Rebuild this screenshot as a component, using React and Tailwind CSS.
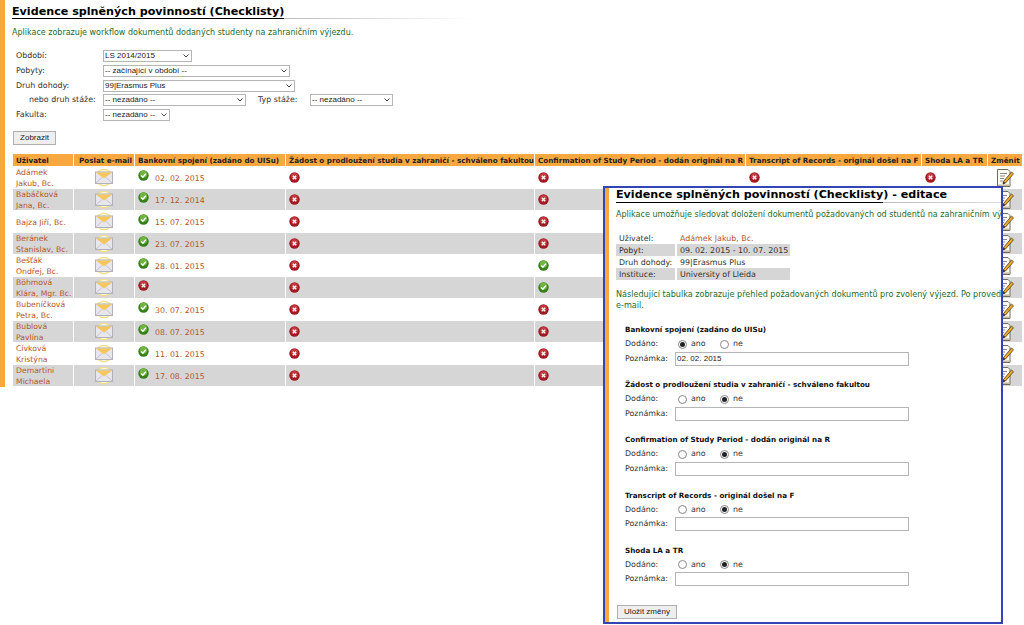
import React from "react";

const Check = () => (
  <svg width="11" height="11" viewBox="0 0 11 11" className="block shrink-0">
    <circle cx="5.5" cy="5.5" r="5.2" fill="#37801c" />
    <circle cx="5.5" cy="4.2" r="3.6" fill="#6fb540" />
    <path d="M3.2 5.6 L4.9 7.2 L7.9 3.6" stroke="#fff" strokeWidth="1.4" fill="none" />
  </svg>
);
const Cross = () => (
  <svg width="11" height="11" viewBox="0 0 11 11" className="block shrink-0">
    <circle cx="5.5" cy="5.5" r="5.2" fill="#a11a22" />
    <circle cx="5.5" cy="4.4" r="3.4" fill="#c23a40" />
    <path d="M3.8 3.8 L7.2 7.2 M7.2 3.8 L3.8 7.2" stroke="#fff" strokeWidth="1.3" fill="none" />
  </svg>
);
const Mail = () => (
  <svg width="20" height="19" viewBox="0 0 20 19" className="block mx-auto">
    <path d="M3.5 4 Q10 -1.5 16.5 4" stroke="#f0dc86" strokeWidth="1.1" fill="#fdf8dc" />
    <path d="M3.5 15 Q10 20.5 16.5 15" stroke="#f0dc86" strokeWidth="1.1" fill="#fdf8dc" />
    <rect x="1.5" y="4" width="17" height="11.5" fill="#e6e6ec" stroke="#b0b0ba" />
    <path d="M2 4.5 L10 10.5 L18 4.5 Z" fill="#f4c65c" />
    <path d="M2 15 L8 9.5 M18 15 L12 9.5" stroke="#c5c5cc" strokeWidth="1" fill="none" />
  </svg>
);
const Edit = () => (
  <svg width="20" height="20" viewBox="0 0 20 20" className="block">
    <path d="M2.5 1.5 H13 L15 3.5 V18.5 H2.5 Z" fill="#fbfbf6" stroke="#6d6d5c" strokeWidth="1" />
    <path d="M3 16.5 H14.5 V18 H3 Z" fill="#c9b89a" />
    <path d="M5 5.5 H12 M5 8 H10 M5 10.5 H9 M5 13 H8" stroke="#8b8b8b" strokeWidth="1" />
    <path d="M8.5 13.5 L16.5 4 L18.5 5.8 L10.5 15 L8 16 Z" fill="#e8a92c" stroke="#54411a" strokeWidth=".8" />
    <path d="M8.5 13.5 L8 16 L10.5 15 Z" fill="#2b2b2b" />
  </svg>
);

const rows = [
  [["Adámek", "Jakub, Bc."], "02. 02. 2015", "x"],
  [["Babáčková", "Jana, Bc."], "17. 12. 2014", "x"],
  [["Bajza Jiří, Bc."], "15. 07. 2015", "x"],
  [["Beránek", "Stanislav, Bc."], "23. 07. 2015", "x"],
  [["Bešťák", "Ondřej, Bc."], "28. 01. 2015", "c"],
  [["Böhmová", "Klára, Mgr. Bc."], "", "c"],
  [["Bubeníčková", "Petra, Bc."], "30. 07. 2015", "x"],
  [["Bublová", "Pavlína"], "08. 07. 2015", "x"],
  [["Cívková", "Kristýna"], "11. 01. 2015", "x"],
  [["Demartini", "Michaela"], "17. 08. 2015", "x"],
];

const headers = [
  ["Uživatel", "w-[60px]", "text-left"],
  ["Poslat e-mail", "w-[60px]", "text-center"],
  ["Bankovní spojení (zadáno do UISu)", "w-[150px]", "text-left"],
  ["Žádost o prodloužení studia v zahraničí - schváleno fakultou", "w-[248px]", "text-left"],
  ["Confirmation of Study Period - dodán originál na R", "w-[210px]", "text-left"],
  ["Transcript of Records - originál došel na F", "w-[175px]", "text-left"],
  ["Shoda LA a TR", "w-[65px]", "text-left"],
  ["Změnit", "w-[34px]", "text-left"],
];

const Select = ({ width, value }) => (
  <div className={`relative shrink-0 ${width}`}>
    <select
      className="block w-full h-[12px] appearance-none border border-[#b5b5b5] bg-white text-[8px] leading-none text-[#222] font-['Liberation_Sans',sans-serif] pl-[1px] rounded-none"
      defaultValue={value}
    >
      <option>{value}</option>
    </select>
    <svg width="6" height="4" viewBox="0 0 6 4" className="absolute right-[3px] top-[4px] pointer-events-none">
      <path d="M0.5 0.5 L3 3 L5.5 0.5" stroke="#444" strokeWidth="1" fill="none" />
    </svg>
  </div>
);

const Field = ({ label, width, value }) => (
  <div className="flex items-center h-[14.7px]">
    <span className="w-[87px] shrink-0">{label}</span>
    <Select width={width} value={value} />
  </div>
);

const Radio = ({ on }) => (
  <span className="w-[9px] h-[9px] rounded-full border border-[#888] bg-white shrink-0 flex items-center justify-center">
    {on && <span className="w-[5px] h-[5px] rounded-full bg-[#222]" />}
  </span>
);

const Section = ({ title, yes, note }) => (
  <div className="h-[55.2px] pl-[9px]">
    <div className="font-bold text-[#111] text-[7.2px] h-[14px] leading-[14px]">{title}</div>
    <div className="flex items-center h-[14px]">
      <span className="w-[53px] shrink-0">Dodáno:</span>
      <Radio on={yes} />
      <span className="ml-[4px] w-[29px]">ano</span>
      <Radio on={!yes} />
      <span className="ml-[4px]">ne</span>
    </div>
    <div className="flex items-center h-[15px]">
      <span className="w-[50px] shrink-0">Poznámka:</span>
      <input
        readOnly
        value={note}
        className="w-[234px] h-[14px] border border-[#b5b5b5] bg-white px-[1px] text-[8px] text-[#222] font-['Liberation_Sans',sans-serif]"
      />
    </div>
  </div>
);

export default function App() {
  return (
    <div className="relative w-[1024px] h-[625px] overflow-hidden bg-white flex items-start font-['DejaVu_Sans',sans-serif] text-[7.9px] text-[#333]">
      <div className="w-[5px] h-[387px] bg-[#f9a83f] shrink-0" />
      <div className="pl-[7px] flex-1 min-w-0">
        <h1 className="pt-[5px] h-[18px] text-[11.15px] leading-[13px] font-bold text-black whitespace-nowrap">
          Evidence splněných povinností (Checklisty)
        </h1>
        <div className="h-px w-[460px] bg-[linear-gradient(to_right,#000_272px,#bbb_272px,#fff)]" />
        <p className="mt-[8px] h-[12px] text-[8px] leading-[12px] text-[#1d6b2c] whitespace-nowrap">
          Aplikace zobrazuje workflow dokumentů dodaných studenty na zahraničním výjezdu.
        </p>
        <div className="mt-[10px] pl-[4px]">
          <Field label="Období:" width="w-[89px]" value="LS 2014/2015" />
          <Field label="Pobyty:" width="w-[187px]" value="-- začínající v období --" />
          <Field label="Druh dohody:" width="w-[192px]" value="99|Erasmus Plus" />
          <div className="flex items-center h-[14.7px]">
            <span className="w-[87px] shrink-0 pl-[13px]">nebo druh stáže:</span>
            <Select width="w-[143px]" value="-- nezadáno --" />
            <span className="ml-[12px] w-[52px]">Typ stáže:</span>
            <Select width="w-[83px]" value="-- nezadáno --" />
          </div>
          <Field label="Fakulta:" width="w-[67px]" value="-- nezadáno --" />
        </div>
        <button className="mt-[9px] ml-px block w-[43px] h-[14px] border border-[#b0b0b0] bg-[#eee] text-[8px] leading-none text-[#222] font-['Liberation_Sans',sans-serif]">
          Zobrazit
        </button>
        <table className="mt-[8px] table-fixed w-[1011px] border-separate border-spacing-[1px]">
          <thead>
            <tr>
              {headers.map(([t, w, a]) => (
                <th
                  key={t}
                  className={`${w} ${a} h-[12px] p-0 pt-px pl-[3px] bg-[#f9a83f] text-[#222] font-bold text-[7.2px] leading-[11px] whitespace-nowrap overflow-hidden`}
                >
                  {t}
                </th>
              ))}
            </tr>
          </thead>
          <tbody>
            {rows.map(([name, date, conf], i) => {
              const bg = i % 2 ? "bg-[#d6d6d6]" : "bg-white";
              return (
                <tr key={i} className="h-[21px]">
                  <td className={`${bg} p-0 pl-[3px] text-[7.7px] leading-[10.5px] text-[#b5562a]`}>
                    <div className="translate-y-px">
                      {name.map((n) => (
                        <div key={n} className="whitespace-nowrap">{n}</div>
                      ))}
                    </div>
                  </td>
                  <td className={`${bg} p-0`}>
                    <Mail />
                  </td>
                  <td className={`${bg} p-0 pl-[3px]`}>
                    <div className="flex items-start h-[16px]">
                      {date ? <Check /> : <Cross />}
                      <span className="ml-[6px] mt-[3px] text-[7.8px] leading-[11px] text-[#b5562a] whitespace-nowrap">{date}</span>
                    </div>
                  </td>
                  <td className={`${bg} p-0 pl-[3px]`}><Cross /></td>
                  <td className={`${bg} p-0 pl-[3px]`}>{conf === "c" ? <Check /> : <Cross />}</td>
                  <td className={`${bg} p-0 pl-[3px]`}><Cross /></td>
                  <td className={`${bg} p-0 pl-[3px]`}><Cross /></td>
                  <td className={`${bg} p-0 pl-[7px]`}><Edit /></td>
                </tr>
              );
            })}
          </tbody>
        </table>
      </div>

      <div className="absolute left-[603px] top-[186px] w-[400px] h-[438px] border-2 border-[#3344b8] bg-white flex overflow-hidden">
        <div className="w-[4px] h-full bg-[#f9a83f] shrink-0" />
        <div className="flex-1 min-w-0 pl-[7px]">
          <h2 className="h-[14px] text-[11.15px] leading-[14px] font-bold text-black whitespace-nowrap">
            Evidence splněných povinností (Checklisty) - editace
          </h2>
          <div className="h-px bg-[linear-gradient(to_right,#000_267px,#bbb_267px,#ddd)]" />
          <p className="mt-[6px] h-[12px] text-[8.05px] leading-[12px] text-[#1d6b2c] whitespace-nowrap">
            Aplikace umožňuje sledovat doložení dokumentů požadovaných od studentů na zahraničním výjezdu.
          </p>
          <table className="mt-[11px] w-[174px] table-fixed border-collapse">
            <tbody>
              {[
                ["Uživatel:", "Adámek Jakub, Bc.", true],
                ["Pobyt:", "09. 02. 2015 - 10. 07. 2015"],
                ["Druh dohody:", "99|Erasmus Plus"],
                ["Instituce:", "University of Lleida"],
              ].map(([l, v, link], i) => (
                <tr key={l} className="h-[12px]">
                  <td className={`w-[60px] p-0 pl-[3px] leading-[11px] whitespace-nowrap border-r-2 border-white ${i % 2 ? "bg-[#d6d6d6]" : ""}`}>{l}</td>
                  <td className={`p-0 pl-[3px] leading-[11px] whitespace-nowrap ${i % 2 ? "bg-[#d6d6d6]" : ""} ${link ? "text-[#b5562a]" : ""}`}>{v}</td>
                </tr>
              ))}
            </tbody>
          </table>
          <p className="mt-[9px] text-[8.1px] leading-[11px] text-[#1d6b2c] whitespace-nowrap">
            Následující tabulka zobrazuje přehled požadovaných dokumentů pro zvolený výjezd. Po provedení změn
            <br />
            e-mail.
          </p>
          <div className="mt-[12px]">
            <Section title="Bankovní spojení (zadáno do UISu)" yes note="02. 02. 2015" />
            <Section title="Žádost o prodloužení studia v zahraničí - schváleno fakultou" note="" />
            <Section title="Confirmation of Study Period - dodán originál na R" note="" />
            <Section title="Transcript of Records - originál došel na F" note="" />
            <Section title="Shoda LA a TR" note="" />
          </div>
          <button className="mt-[6px] ml-px block w-[60px] h-[14px] border border-[#b0b0b0] bg-[#eee] text-[8px] leading-none text-[#222] font-['Liberation_Sans',sans-serif]">
            Uložit změny
          </button>
        </div>
      </div>
    </div>
  );
}
